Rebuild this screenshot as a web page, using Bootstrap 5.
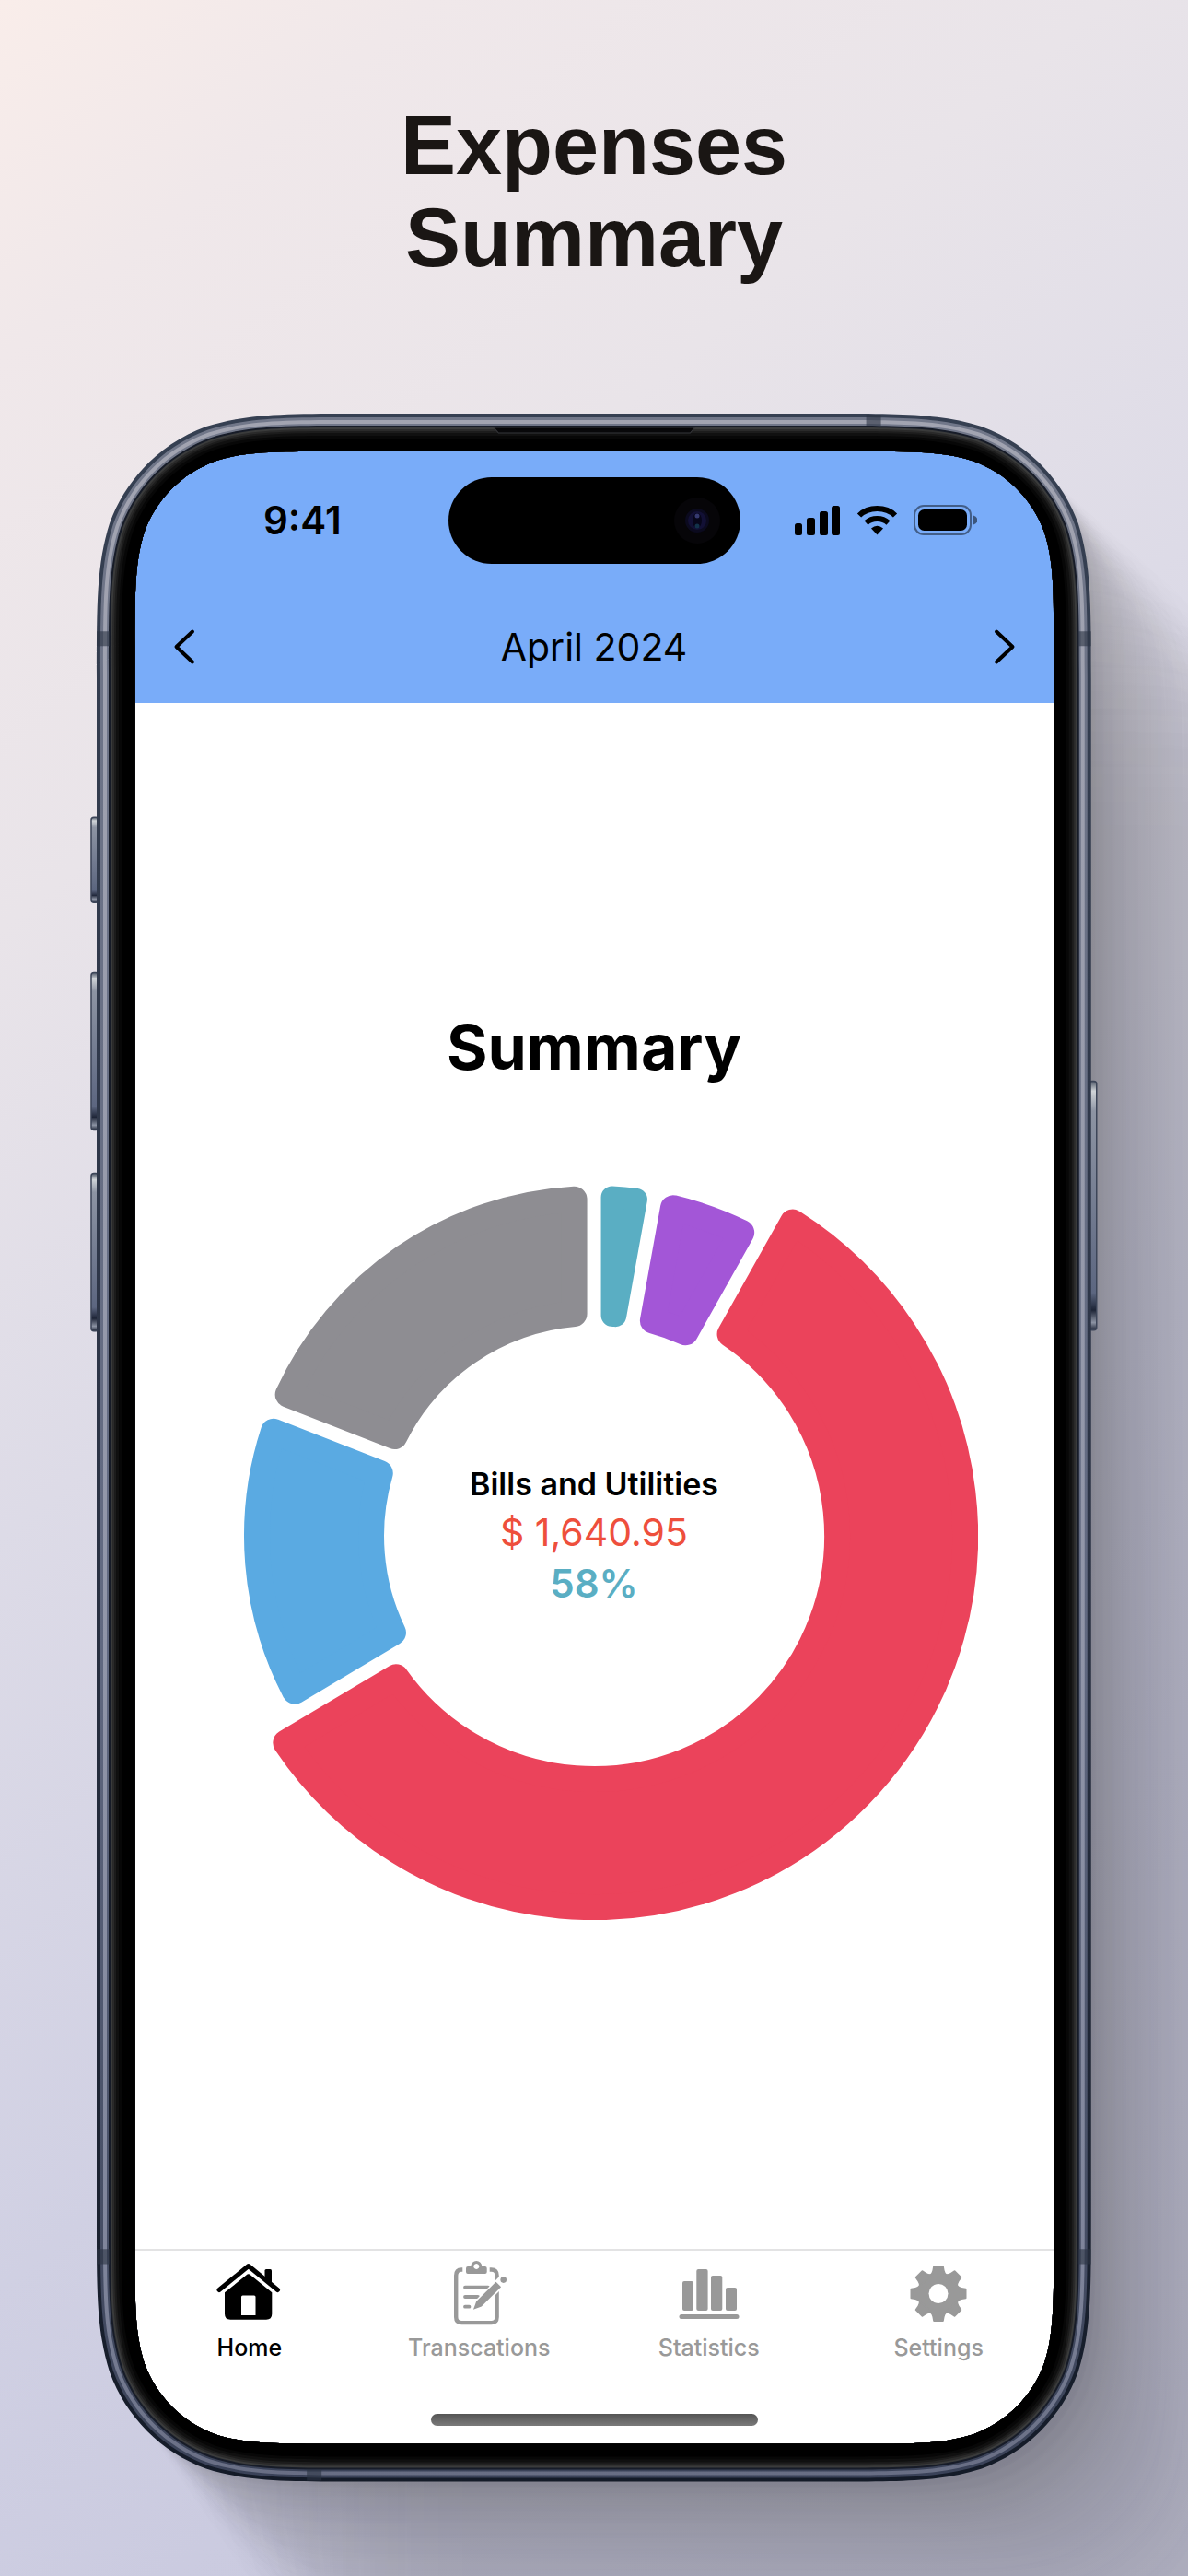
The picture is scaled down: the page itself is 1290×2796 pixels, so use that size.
<!DOCTYPE html>
<html lang="en">
<head>
<meta charset="utf-8">
<meta name="viewport" content="width=device-width, initial-scale=1">
<title>Expenses Summary</title>
<link href="https://cdn.jsdelivr.net/npm/bootstrap@5.3.0/dist/css/bootstrap.min.css" rel="stylesheet">
<style>
  .promo {
    background: linear-gradient(140deg, #f9edea 0%, #f0e8ea 10%, #e9e4e9 26%, #dddbe7 43%, #d0d0e3 64%, #cbcbe0 76%, #c6c6da 100%);
    padding: 108px 8.15vw 104px;
    gap: 141px;
  }
  .promo-title {
    font: 700 90px/100px "Liberation Sans", Arial, sans-serif;
    color: #1a1614;
  }
  .phone {
    aspect-ratio: 1079 / 2243;
    padding: 41px;
    font-family: Inter, "Noto Sans", sans-serif;
    color: #000;
  }
  .phone-shadow, .phone-frame {
    position: absolute;
    inset: 0;
    width: 100%;
    height: 100%;
    overflow: visible;
    pointer-events: none;
  }
  .phone-frame { z-index: 2; }
  .app-screen { background: #fff; border-radius: 120px; z-index: 1; }
  .app-header { background: #79acf9; padding-top: 28px; gap: 28px; }
  .status-side { flex: 1 1 0; }
  .status-time { font-size: 42px; font-weight: 600; line-height: 48px; }
  .island { width: 317px; height: 94px; border-radius: 47px; background: #000; }
  .month-bar { height: 123px; padding: 0 40px; }
  .month-label { font-size: 41px; line-height: 48px; font-weight: 400; }
  .app-main { gap: 71px; padding-bottom: 26px; }
  .sum-title { font-size: 68px; line-height: 86px; font-weight: 700; }
  .donut-box { width: 83.6%; }
  .donut-name { font-size: 34px; line-height: 48px; font-weight: 600; }
  .donut-value { font-size: 41px; line-height: 56px; color: #ee4f3c; }
  .donut-share { font-size: 42px; line-height: 56px; font-weight: 600; color: #5aaec3; }
  .tab-bar { border-top: 2px solid #e3e3e4; padding-bottom: 20px; }
  .tab-link { color: #999; font-size: 25px; line-height: 32px; font-weight: 500; gap: 6px; padding-top: 11px; }
  .tab-link.active { color: #000; }
  .home-pill { width: 355px; height: 13px; border-radius: 7px; background: linear-gradient(#555, #7a7a7a); margin-top: 56px; }
</style>
<script src="https://cdn.jsdelivr.net/npm/bootstrap@5.3.0/dist/js/bootstrap.bundle.min.js"></script>
</head>
<body>
<div class="promo d-flex flex-column min-vh-100 overflow-hidden">
  <h1 class="promo-title text-center m-0">Expenses<br>Summary</h1>

  <div class="phone position-relative d-flex">
    <svg class="phone-shadow" viewBox="0 0 1079 2243" aria-hidden="true"><g id="shadow"></g></svg>

    <div class="app-screen position-relative flex-fill d-flex flex-column overflow-hidden">
      <header class="app-header d-flex flex-column">
        <div class="d-flex align-items-center">
          <div class="status-side status-time text-center ps-4">9:41</div>
          <div class="island d-flex align-items-center justify-content-end">
            <svg width="94" height="94" viewBox="0 0 94 94" aria-hidden="true">
              <circle cx="47" cy="47" r="25" fill="#060508"/>
              <circle cx="47" cy="47" r="13" fill="#0b0a1e"/>
              <circle cx="47" cy="47" r="10" fill="#121035"/>
              <ellipse cx="47" cy="47" rx="5" ry="8" fill="#07061a"/>
              <circle cx="47" cy="42" r="2.500" fill="#35396f"/>
              <circle cx="47" cy="53" r="2.500" fill="#12324a"/>
            </svg>
          </div>
          <div class="status-side d-flex justify-content-center pe-4">
            <svg width="198" height="34" viewBox="0 0 198 34" aria-hidden="true">
              <rect x="0" y="20" width="8" height="13" rx="2.5"/>
              <rect x="13" y="14" width="9" height="19" rx="2.5"/>
              <rect x="27" y="7" width="9" height="26" rx="2.5"/>
              <rect x="40" y="1" width="9" height="32" rx="2.5"/>
              <g fill="none" stroke="#000" stroke-width="6">
                <path d="M70 11.500C80 1.500 99 1.500 109 11.500"/>
                <path d="M77.500 19.500C84 13.500 95 13.500 101.500 19.500"/>
              </g>
              <path d="M89.500 32.500L83 25.500Q89.500 20 96 25.500Z"/>
              <rect x="130" y="1" width="61" height="31" rx="10" fill="none" stroke="#000" stroke-opacity=".45" stroke-width="2"/>
              <rect x="134" y="5" width="53" height="23" rx="6.500"/>
              <path d="M194 11.500q4.500 1.500 4.500 5t-4.500 5z" fill-opacity=".5"/>
            </svg>
          </div>
        </div>
        <div class="month-bar d-flex align-items-center justify-content-between">
          <button type="button" class="btn p-0 border-0 lh-1" aria-label="Previous month">
            <svg width="26" height="42" viewBox="0 0 26 42" fill="none" stroke="#000" stroke-width="4" stroke-linecap="round" stroke-linejoin="round"><path d="M23 4.500L5.500 21l17.500 16.500"/></svg>
          </button>
          <h2 class="month-label m-0">April 2024</h2>
          <button type="button" class="btn p-0 border-0 lh-1" aria-label="Next month">
            <svg width="26" height="42" viewBox="0 0 26 42" fill="none" stroke="#000" stroke-width="4" stroke-linecap="round" stroke-linejoin="round"><path d="M4 4.500L21.500 21 4 37.500"/></svg>
          </button>
        </div>
      </header>

      <main class="app-main flex-grow-1 d-flex flex-column align-items-center justify-content-center">
        <h2 class="sum-title m-0">Summary</h2>
        <div class="donut-box position-relative">
          <svg class="d-block w-100" viewBox="-417 -417 834 834" role="img" aria-label="Expenses by category"><g id="donut"></g></svg>
          <div class="position-absolute top-0 start-0 w-100 h-100 d-flex flex-column align-items-center justify-content-center">
            <div class="donut-name">Bills and Utilities</div>
            <div class="donut-value">$ 1,640.95</div>
            <div class="donut-share">58%</div>
          </div>
        </div>
      </main>

      <footer class="tab-bar d-flex flex-column align-items-center">
        <nav class="row g-0 w-100">
          <a href="#" class="tab-link active col-3 d-flex flex-column align-items-center text-decoration-none" aria-current="page">
            <svg width="72" height="72" viewBox="0 0 72 72" fill="currentColor" aria-hidden="true">
              <path d="M3 31.500L34.800 5.500 66.500 31.500" fill="none" stroke="currentColor" stroke-width="5" stroke-linecap="round" stroke-linejoin="round"/>
              <path d="M52.500 20V10.500q0-1.500 1.500-1.500h4.500q1.500 0 1.500 1.500V26z"/>
              <path fill-rule="evenodd" d="M33.600 14.600q1.200-.9 2.400 0L60.300 34.200V57.500q0 6.200-6.200 6.200H15.200q-6.200 0-6.200-6.200V34.200zM28.500 37.500q-1.500 0-1.500 1.500v20h15.500v-20q0-1.500-1.500-1.500z"/>
            </svg>
            Home
          </a>
          <a href="#" class="tab-link col-3 d-flex flex-column align-items-center text-decoration-none">
            <svg width="72" height="72" viewBox="0 0 72 72" fill="currentColor" aria-hidden="true">
              <g fill="none" stroke="currentColor" stroke-width="4.400">
                <path d="M18.300 9.500h-1q-6.100 0-6.100 6.500v45q0 6.100 6.100 6.100h32.200q6.100 0 6.100-6.100V16q0-6.500-6.100-6.500h-1.800"/>
                <path d="M21 28.700h25M21 39h14M21 49.700h4.500" stroke-width="3.800" stroke-linecap="round"/>
              </g>
              <path d="M32 51L65 18" stroke="#fff" stroke-width="11"/>
              <path fill-rule="evenodd" d="M24 6h3.300a6 6 0 0 1 12 0h3.400q2 0 2 2v4q0 2-2 2H24q-2 0-2-2V8q0-2 2-2zM33.300 3a3 3 0 1 0 .01 0z"/>
              <path d="M30 52.800l3.200-8.800L54.500 22.700l5.600 5.600-21.300 21.300z"/>
              <circle cx="62.700" cy="20.600" r="3.300"/>
            </svg>
            Transcations
          </a>
          <a href="#" class="tab-link col-3 d-flex flex-column align-items-center text-decoration-none">
            <svg width="72" height="72" viewBox="0 0 72 72" fill="currentColor" aria-hidden="true">
              <rect x="7" y="22" width="12" height="32" rx="2"/>
              <rect x="22.300" y="9" width="12.300" height="45" rx="2"/>
              <rect x="38" y="16" width="12.300" height="38" rx="2"/>
              <rect x="54" y="29" width="12" height="25" rx="2"/>
              <rect x="3.500" y="58" width="65" height="5" rx="2.500"/>
            </svg>
            Statistics
          </a>
          <a href="#" class="tab-link col-3 d-flex flex-column align-items-center text-decoration-none">
            <svg width="72" height="72" viewBox="-36 -35.500 72 72" aria-hidden="true">
              <g id="gear" fill="currentColor" stroke="currentColor" stroke-width="2" stroke-linejoin="round"></g>
              <circle r="10.500" fill="#fff"/>
            </svg>
            Settings
          </a>
        </nav>
        <div class="home-pill"></div>
      </footer>
    </div>

    <svg class="phone-frame" viewBox="0 0 1079 2243" aria-hidden="true">
      <defs>
        <linearGradient id="edge" x1="0" y1="0" x2="0" y2="1"><stop offset="0" stop-color="#364052"/><stop offset=".5" stop-color="#2c3446"/><stop offset="1" stop-color="#141b28"/></linearGradient>
        <linearGradient id="metal" x1="0" y1="0" x2="0" y2="1"><stop offset="0" stop-color="#717789"/><stop offset=".6" stop-color="#606880"/><stop offset="1" stop-color="#3a4258"/></linearGradient>
        <linearGradient id="shine" x1="0" y1="0" x2="0" y2="1"><stop offset="0" stop-color="#a2a4b1"/><stop offset=".6" stop-color="#9095a8"/><stop offset=".9" stop-color="#7e849a"/><stop offset="1" stop-color="#686e84"/></linearGradient>
        <linearGradient id="key" x1="0" y1="0" x2="0" y2="1"><stop offset="0" stop-color="#4d5666"/><stop offset=".04" stop-color="#d0d4d8"/><stop offset=".12" stop-color="#8d94a3"/><stop offset=".85" stop-color="#5c6680"/><stop offset=".92" stop-color="#1d2436"/><stop offset=".97" stop-color="#8c93a3"/><stop offset="1" stop-color="#1d2436"/></linearGradient>
      </defs>
      <g fill="url(#key)" stroke="#3c4558" stroke-width="1.500">
        <rect x="-6" y="438" width="8" height="92" rx="3"/>
        <rect x="-6" y="606" width="8" height="171" rx="3"/>
        <rect x="-6" y="824" width="8" height="171" rx="3"/>
        <rect x="1077" y="724" width="8" height="270" rx="3"/>
      </g>
      <g id="frame"></g>
      <g fill="#2b3342" fill-opacity=".6">
        <path d="M0 236h14v16H0zM1065 236h14v16h-14zM0 1991h14v16H0zM1065 1991h14v16h-14zM835 1h16v12h-16zM228 2230h16v12h-16z"/>
      </g>
      <path d="M431 15h218l-5 6H436z" fill="#08080a" stroke="#35363a" stroke-width="1"/>
    </svg>
  </div>
</div>

<script>
  const SVG = 'http://www.w3.org/2000/svg';
  function add(parent, tag, attrs) {
    const el = document.createElementNS(SVG, tag);
    for (const k in attrs) el.setAttribute(k, attrs[k]);
    parent.appendChild(el);
    return el;
  }

  // Rectangle with continuous-curvature corners
  function smoothRect(x, y, w, h, r) {
    const pts = [[1.5287, 0], [1.0885, 0], [.8684, 0], [.6315, .0749], [.3728, .1691], [.1691, .3728], [.0749, .6315], [0, .8684], [0, 1.0885], [0, 1.5287]];
    const corner = (list, fx, fy) => list.map(p => fx(p[0] * r).toFixed(2) + ' ' + fy(p[1] * r).toFixed(2));
    const L = v => x + v, R = v => x + w - v, T = v => y + v, B = v => y + h - v;
    const back = pts.slice().reverse();
    const join = c => c[0] + 'C' + c.slice(1).join(' ');
    return 'M' + join(corner(back, L, T)) + 'L' + join(corner(pts, R, T)) +
           'L' + join(corner(back, R, B)) + 'L' + join(corner(pts, L, B)) + 'Z';
  }

  // Phone bezel: nested rings around the screen opening
  const opening = smoothRect(41.5, 41, 997, 2161, 138);
  const rings = [[0, 'url(#edge)'], [4, 'url(#metal)'], [7, 'url(#shine)'], [11, 'url(#metal)'], [13, '#171c28'],
                 [15, '#3a3b3b'], [17, '#2a2a2a'], [19, '#1c1c1c'], [21, '#101010'], [24, '#070707'], [27, '#000']];
  const frame = document.getElementById('frame');
  rings.forEach(([d, fill]) => add(frame, 'path', {
    d: smoothRect(d, d, 1079 - 2 * d, 2243 - 2 * d, 188 - d) + opening, fill, 'fill-rule': 'evenodd'
  }));

  // Cast shadow: copies of the body pushed away from the light, softer with distance
  const shadow = document.getElementById('shadow');
  [[8, .04], [16, .04], [26, .035], [38, .035], [52, .03], [68, .03], [86, .03], [106, .03],
   [130, .03], [160, .03], [195, .03], [235, .03], [280, .03], [330, .03]].forEach(([o, a]) => add(shadow, 'path', {
    d: smoothRect(4, 4, 1071, 2235, 184), fill: '#15101c', 'fill-opacity': a,
    transform: `translate(${o} ${o * 1.15})`, style: `filter:blur(${o * .13}px)`
  }));

  // Donut slices, angles in degrees clockwise from the top
  const slices = [
    { from: 0, to: 10.2, color: '#5aaec3', r: 12 },
    { from: 10.2, to: 29.3, color: '#a356d7', r: 14 },
    { from: 29.3, to: 239.2, color: '#eb435b', r: 14, selected: true },
    { from: 239.2, to: 291.4, color: '#5aaae2', r: 14 },
    { from: 291.4, to: 360, color: '#8e8d92', r: 14 }
  ];
  const donut = document.getElementById('donut');
  slices.forEach(s => {
    const outer = (s.selected ? 417 : 380) - s.r, inner = (s.selected ? 250 : 228) + s.r, h = 7.5 + s.r;
    const rad = Math.PI / 180;
    const at = (R, deg, side) => {
      const t = deg * rad + side * Math.asin(h / R);
      return (R * Math.sin(t)).toFixed(2) + ' ' + (-R * Math.cos(t)).toFixed(2);
    };
    const big = s.to - s.from > 190 ? 1 : 0;
    add(donut, 'path', {
      d: `M${at(outer, s.from, 1)}A${outer} ${outer} 0 ${big} 1 ${at(outer, s.to, -1)}L${at(inner, s.to, -1)}A${inner} ${inner} 0 ${big} 0 ${at(inner, s.from, 1)}Z`,
      fill: s.color, stroke: s.color, 'stroke-width': 2 * s.r, 'stroke-linejoin': 'round'
    });
  });

  // Settings gear
  const gear = document.getElementById('gear');
  add(gear, 'circle', { r: 21.5 });
  for (let i = 0; i < 8; i++) add(gear, 'path', { d: 'M-8.500-20Q-6.200-22-5.600-25L-4.800-29.500H4.800L5.600-25Q6.200-22 8.500-20Z', transform: `rotate(${i * 45})` });
</script>
</body>
</html>
